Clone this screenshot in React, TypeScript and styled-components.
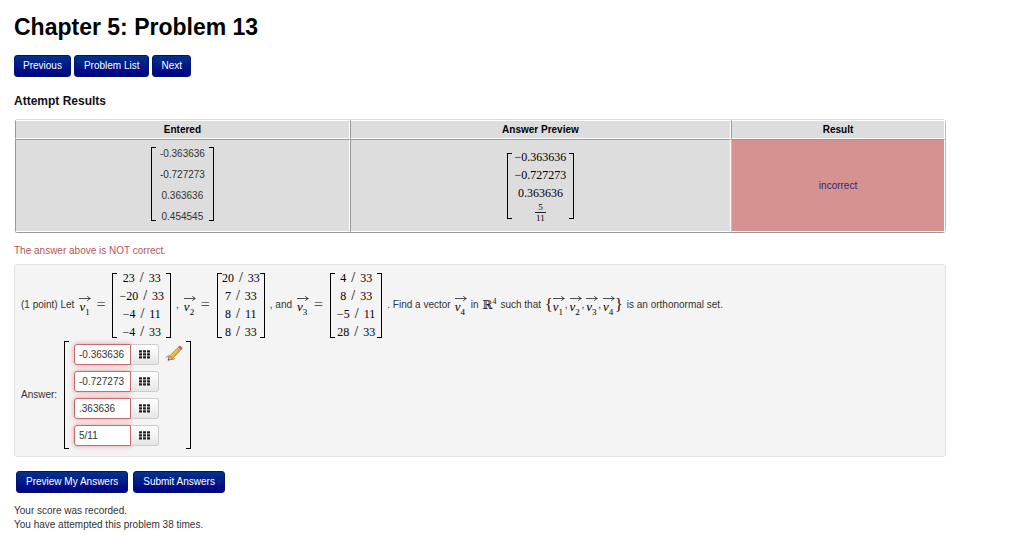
import React from 'react';
import styled, { createGlobalStyle } from 'styled-components';

const GlobalStyle = createGlobalStyle`
  * { box-sizing: border-box; }
  body {
    margin: 0;
    background: #fff;
    color: #333;
    font-family: "Liberation Sans", Arial, sans-serif;
    font-size: 10px;
    line-height: 14px;
  }
`;

const Page = styled.main`
  padding: 13px 78px 2px 14px;
`;

const Title = styled.h1`
  margin: 0 0 14px;
  color: #000;
  font-size: 23px;
  line-height: 28px;
`;

const Toolbar = styled.div`
  display: flex;
  gap: 3px;
`;

const SubmitBar = styled.div`
  display: flex;
  gap: 5px;
  margin-top: 14px;
  padding-left: 2px;
`;

const BlueButton = styled.button<{ $wide?: boolean }>`
  height: 22px;
  padding: 0 ${(p) => (p.$wide ? 9 : 8)}px;
  border: 1px solid #00156e;
  border-radius: 3px;
  background: linear-gradient(#003388, #000088);
  color: #fff;
  font: inherit;
  font-size: 10px;
  cursor: pointer;
`;

const SectionTitle = styled.h2`
  margin: 16px 0 10px;
  color: #111;
  font-size: 12px;
  line-height: 16px;
`;

const ResultsTable = styled.table`
  width: 100%;
  table-layout: fixed;
  border-collapse: separate;
  border-spacing: 0;
  border: 1px solid #999;
  border-top-color: #ddd;
  border-right-color: #bbb;
  border-left-color: #fff;
  border-radius: 4px;
`;

const HeadCell = styled.th<{ $width: string }>`
  width: ${(p) => p.$width};
  height: 19px;
  padding: 0;
  border: 1px solid #fff;
  border-left-color: #999;
  background: #ddd;
  color: #000;
  font-size: 10px;
  line-height: 14px;
`;

const Cell = styled.td<{ $wrong?: boolean }>`
  height: 93px;
  padding: 0;
  border: 1px solid #fff;
  border-top-color: #999;
  border-left-color: ${(p) => (p.$wrong ? '#bbb' : '#999')};
  background: ${(p) => (p.$wrong ? '#d69191' : '#ddd')};
  text-align: center;
  vertical-align: middle;
`;

const ResultLink = styled.a`
  color: #2f2a75;
  text-decoration: none;
`;

const Warning = styled.p`
  margin: 11px 0 6px;
  color: #b55656;
`;

const Panel = styled.section`
  padding: 4px 7px 7px 6px;
  border: 1px solid #e3e3e3;
  border-radius: 3px;
  background: #f4f4f4;
`;

const Statement = styled.div`
  display: flex;
  align-items: center;
  gap: 5px;
  white-space: nowrap;
`;

const StatementEnd = styled.span`
  display: flex;
  align-items: center;
  gap: 4px;
`;

const Matrix = styled.span`
  display: inline-flex;
  align-items: center;
  vertical-align: middle;
`;

const PlainMatrix = styled(Matrix)`
  padding-bottom: 4px;
`;

const Bracket = styled.span<{ $side: 'left' | 'right'; $height: number }>`
  flex: none;
  width: 5px;
  height: ${(p) => p.$height}px;
  border: 1px solid #000;
  border-${(p) => (p.$side === 'left' ? 'right' : 'left')}: 0;
`;

const MathRows = styled.span<{ $pad: number }>`
  display: grid;
  justify-items: center;
  padding: 0 ${(p) => p.$pad}px;
  color: #000;
  font-family: "Liberation Serif", "Times New Roman", serif;
  font-size: 12px;
  line-height: 18px;
`;

const Slash = styled.span`
  margin: 0 5px;
  font-size: 14px;
  line-height: 1px;
`;

const PlainRows = styled.span`
  display: grid;
  padding: 3px 4px 0;
  line-height: 21px;
`;

const Fraction = styled.span`
  display: grid;
  justify-items: center;
  font-size: 9px;
  line-height: 10px;
`;

const Numerator = styled.span`
  padding: 0 3px;
  border-bottom: 1px solid #222;
`;

const MathText = styled.span`
  color: #111;
  font-family: "Liberation Serif", "DejaVu Serif", serif;
  font-size: 12px;

  sup {
    font-size: 8px;
    line-height: 1px;
  }
`;

const VectorBox = styled.span`
  display: inline-flex;
  flex-direction: column;
  padding-bottom: 3px;
  color: #000;
  font-family: "Liberation Serif", "Times New Roman", serif;
  font-size: 13px;
  line-height: 11px;

  sub {
    font-size: 9px;
    line-height: 1px;
  }
`;

const Equals = styled.span`
  padding-right: 2px;
  color: #555;
  font-family: "Liberation Serif", serif;
  font-size: 16px;
`;

const VectorSet = styled.span`
  display: inline-flex;
  align-items: center;
`;

const Brace = styled.span`
  color: #111;
  font-family: "Liberation Serif", serif;
  font-size: 16px;
`;

const SetComma = styled.span`
  padding-right: 2px;
`;

const AnswerRow = styled.div`
  display: flex;
  align-items: center;
`;

const AnswerLabel = styled.span`
  width: 43px;
`;

const AnswerFields = styled.div`
  display: grid;
  gap: 6px;
  padding: 0 27px 0 5px;
`;

const Field = styled.div`
  display: flex;
  position: relative;
`;

const AnswerInput = styled.input`
  width: 57px;
  height: 21px;
  padding: 0 4px;
  border: 1px solid #c66a70;
  border-radius: 3px 0 0 3px;
  background: #fff;
  box-shadow: 0 0 5px rgba(220, 90, 95, 0.6);
  color: #333;
  font: inherit;
  font-size: 10px;
`;

const KeypadButton = styled.button`
  display: grid;
  place-items: center;
  width: 28px;
  height: 21px;
  padding: 0;
  border: 1px solid #ccc;
  border-left: 0;
  border-radius: 0 3px 3px 0;
  background: linear-gradient(#fff, #e6e6e6);
  cursor: pointer;
`;

const EditButton = styled.button`
  position: absolute;
  top: 1px;
  left: 91px;
  width: 18px;
  height: 18px;
  padding: 0;
  border: 0;
  background: none;
  cursor: pointer;
`;

const Status = styled.p`
  margin: 11px 0 0;
`;

function Vector({ index }: { index: number }) {
  return (
    <VectorBox>
      <svg width="12" height="6" viewBox="0 0 12 6" fill="none" stroke="#222" aria-hidden="true">
        <path d="M0 3.5H11M8.3 1C9 2.3 10 3 11.4 3.5C10 4 9 4.7 8.3 6" strokeWidth=".8" />
      </svg>
      <span>
        <i>v</i>
        <sub>{index}</sub>
      </span>
    </VectorBox>
  );
}

function FractionMatrix({ rows, pad }: { rows: [string, string][]; pad: number }) {
  return (
    <Matrix>
      <Bracket $side="left" $height={65} />
      <MathRows $pad={pad}>
        {rows.map(([top, bottom]) => (
          <span key={top + bottom}>
            {top}
            <Slash>/</Slash>
            {bottom}
          </span>
        ))}
      </MathRows>
      <Bracket $side="right" $height={65} />
    </Matrix>
  );
}

function KeypadIcon() {
  return (
    <svg width="11" height="9" viewBox="0 0 11 9" fill="#222" aria-hidden="true">
      {[0, 3, 6].map((y) =>
        [0, 4, 8].map((x) => <rect key={`${x}-${y}`} x={x} y={y + 0.3} width="3" height="2.3" rx=".3" />),
      )}
    </svg>
  );
}

function PencilIcon() {
  return (
    <svg width="18" height="18" viewBox="0 0 18 18" aria-hidden="true">
      <path d="M1 12.5C3 10 5 11 3.5 13C2.5 15 5 15.5 10 13.5" fill="none" stroke="#888" strokeWidth="1.1" />
      <path d="M3 15.5L4.6 11L7.3 13.4Z" fill="#f1d3a0" stroke="#8b6336" strokeWidth=".6" />
      <path d="M4.6 11L12 3.5L14.8 6L7.3 13.4Z" fill="#f5a426" stroke="#b86e14" strokeWidth=".7" />
      <path d="M5.8 11.5L13 4.4" stroke="#ffdc73" strokeWidth="1" />
      <path d="M12 3.5L13.2 2.3L16 4.8L14.8 6Z" fill="#c9ccd2" stroke="#888" strokeWidth=".5" />
      <path d="M13.2 2.3L14.2 1.3Q15 .7 16 1.6L16.8 2.4Q17.5 3.2 16.8 4L16 4.8Z" fill="#e2604f" stroke="#b14538" strokeWidth=".5" />
      <path d="M3 15.5L3.5 14L4.4 14.8Z" fill="#333" />
    </svg>
  );
}

const entered = ['-0.363636', '-0.727273', '0.363636', '0.454545'];
const answers = ['-0.363636', '-0.727273', '.363636', '5/11'];

export default function App() {
  return (
    <>
      <GlobalStyle />
      <Page>
        <Title>Chapter 5: Problem 13</Title>
        <Toolbar>
          <BlueButton>Previous</BlueButton>
          <BlueButton $wide>Problem List</BlueButton>
          <BlueButton>Next</BlueButton>
        </Toolbar>

        <SectionTitle>Attempt Results</SectionTitle>
        <ResultsTable>
          <thead>
            <tr>
              <HeadCell $width="36%">Entered</HeadCell>
              <HeadCell $width="41%">Answer Preview</HeadCell>
              <HeadCell $width="23%">Result</HeadCell>
            </tr>
          </thead>
          <tbody>
            <tr>
              <Cell>
                <PlainMatrix>
                  <Bracket $side="left" $height={74} />
                  <PlainRows>
                    {entered.map((value) => (
                      <span key={value}>{value}</span>
                    ))}
                  </PlainRows>
                  <Bracket $side="right" $height={74} />
                </PlainMatrix>
              </Cell>
              <Cell>
                <Matrix>
                  <Bracket $side="left" $height={66} />
                  <MathRows $pad={3}>
                    <span>−0.363636</span>
                    <span>−0.727273</span>
                    <span>0.363636</span>
                    <Fraction>
                      <Numerator>5</Numerator>
                      <span>11</span>
                    </Fraction>
                  </MathRows>
                  <Bracket $side="right" $height={66} />
                </Matrix>
              </Cell>
              <Cell $wrong>
                <ResultLink href="#answer">incorrect</ResultLink>
              </Cell>
            </tr>
          </tbody>
        </ResultsTable>

        <Warning>The answer above is NOT correct.</Warning>

        <Panel id="answer">
          <Statement>
            <span>(1 point) Let</span>
            <Vector index={1} />
            <Equals>=</Equals>
            <FractionMatrix pad={2} rows={[['23', '33'], ['−20', '33'], ['−4', '11'], ['−4', '33']]} />
            <span>,</span>
            <Vector index={2} />
            <Equals>=</Equals>
            <FractionMatrix pad={0} rows={[['20', '33'], ['7', '33'], ['8', '11'], ['8', '33']]} />
            <span>, and</span>
            <Vector index={3} />
            <Equals>=</Equals>
            <FractionMatrix pad={2} rows={[['4', '33'], ['8', '33'], ['−5', '11'], ['28', '33']]} />
            <StatementEnd>
              <span>. Find a vector</span>
              <Vector index={4} />
              <span>in</span>
              <MathText>
                ℝ<sup>4</sup>
              </MathText>
              <span>such that</span>
              <VectorSet>
                <Brace>{'{'}</Brace>
                <Vector index={1} />
                <SetComma>,</SetComma>
                <Vector index={2} />
                <SetComma>,</SetComma>
                <Vector index={3} />
                <SetComma>,</SetComma>
                <Vector index={4} />
                <Brace>{'}'}</Brace>
              </VectorSet>
              <span>is an orthonormal set.</span>
            </StatementEnd>
          </Statement>

          <AnswerRow>
            <AnswerLabel id="answer-label">Answer:</AnswerLabel>
            <Bracket $side="left" $height={108} />
            <AnswerFields role="group" aria-labelledby="answer-label">
              {answers.map((value, i) => (
                <Field key={value}>
                  <AnswerInput aria-label={`Answer entry ${i + 1}`} defaultValue={value} />
                  <KeypadButton aria-label="Open equation editor">
                    <KeypadIcon />
                  </KeypadButton>
                  {i === 0 && (
                    <EditButton aria-label="Edit answer">
                      <PencilIcon />
                    </EditButton>
                  )}
                </Field>
              ))}
            </AnswerFields>
            <Bracket $side="right" $height={108} />
          </AnswerRow>
        </Panel>

        <SubmitBar>
          <BlueButton $wide>Preview My Answers</BlueButton>
          <BlueButton $wide>Submit Answers</BlueButton>
        </SubmitBar>
        <Status>
          Your score was recorded.
          <br />
          You have attempted this problem 38 times.
        </Status>
      </Page>
    </>
  );
}
